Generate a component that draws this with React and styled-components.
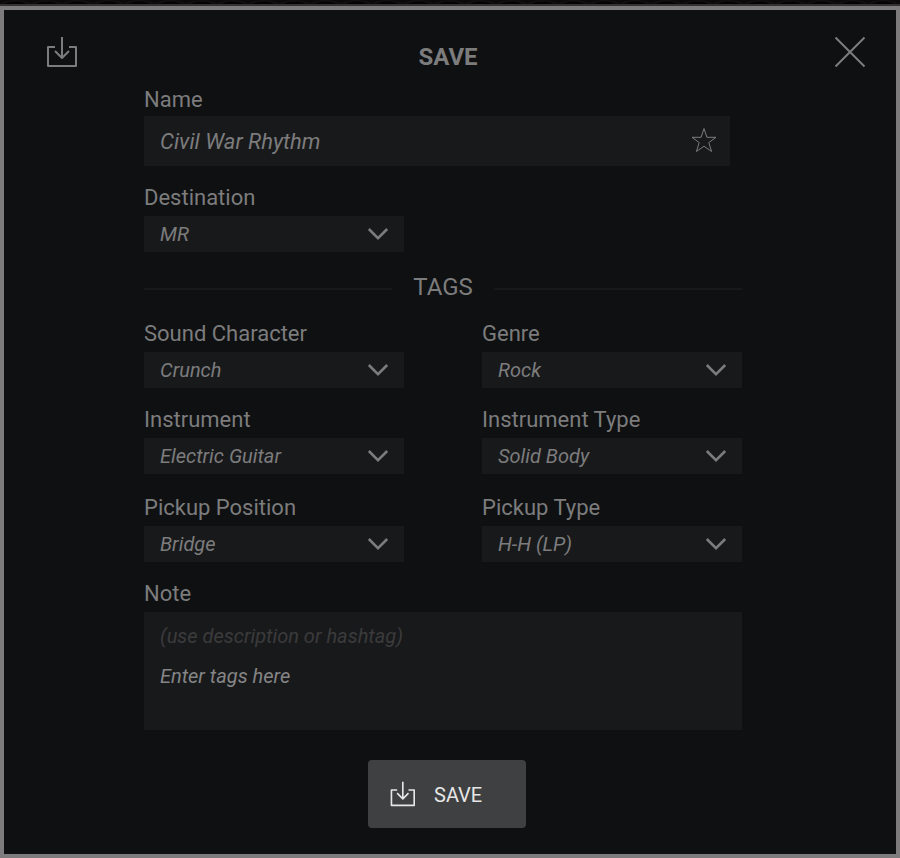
import React, { useId, useState } from "react";
import styled, { createGlobalStyle } from "styled-components";

const color = {
  panel: "#0f1012",
  field: "#18191b",
  text: "#7c7c7d",
  faint: "#3b3b3c",
  frame: "#7d7b7c",
  button: "#3f4042",
  buttonText: "#e6e6e6",
};

const GlobalStyle = createGlobalStyle`
  *, *::before, *::after { box-sizing: border-box; }
  body { margin: 0; background: #0b090a; }
  body, button, input, select, textarea { font-family: Roboto, "Liberation Sans", sans-serif; }
`;

const Page = styled.div`
  display: flex;
  flex-direction: column;
  min-height: 100vh;
`;

const Backdrop = styled.div`
  height: 6px;
  flex: none;
  background: radial-gradient(ellipse at 50% 120%, #050404 40%, #131011 60%, #0b090a 75%) 0 0 / 31px 4px;
  border-bottom: 2px solid #343132;
`;

const Dialog = styled.main`
  flex: 1;
  border: 4px solid ${color.frame};
  background: ${color.panel};
  color: ${color.text};
`;

const Header = styled.header`
  display: grid;
  grid-template-columns: 1fr auto 1fr;
  padding: 12px 16px 0 12px;
`;

const HeaderMark = styled.span`
  padding: 14px 0 0 29px;
  height: 60px;
`;

const Title = styled.h1`
  margin: 0;
  padding-top: 21px;
  font-size: 24px;
  font-weight: 700;
  line-height: 28px;
`;

const CloseButton = styled.button`
  justify-self: end;
  display: grid;
  place-items: center;
  width: 60px;
  height: 60px;
  padding: 0;
  border: 0;
  background: none;
  color: inherit;
  cursor: pointer;
`;

const Drawing = styled.svg`
  display: block;
  fill: none;
  stroke: currentColor;
`;

const Form = styled.form`
  padding: 6px 154px 24px 140px;
`;

const Field = styled.div`
  display: flex;
  flex-direction: column;
  gap: ${(p) => p.$gap || 6}px;
`;

const Label = styled.label`
  font-size: 22px;
  line-height: 24px;
`;

const NameBox = styled.div`
  display: flex;
  align-items: center;
  height: 50px;
  margin-right: 12px;
  padding: 0 12px 0 16px;
  background: ${color.field};
`;

const NameInput = styled.input`
  flex: 1;
  min-width: 0;
  padding: 2px 0 0;
  border: 0;
  outline: 0;
  background: none;
  color: inherit;
  font-size: 22px;
  font-style: italic;
  line-height: 28px;
`;

const StarButton = styled.button`
  padding: 0;
  border: 0;
  background: none;
  color: inherit;
  cursor: pointer;
`;

const Row = styled.div`
  display: grid;
  grid-template-columns: 1fr 1fr;
  column-gap: 78px;
  margin-top: ${(p) => p.$space}px;
`;

const SelectBox = styled.div`
  display: grid;
  align-items: center;
  background: ${color.field};

  & > * { grid-area: 1 / 1; }
  & > svg { justify-self: end; margin-right: 15px; pointer-events: none; }
`;

const Select = styled.select`
  appearance: none;
  width: 100%;
  height: 36px;
  padding: 0 48px 0 16px;
  border: 0;
  border-radius: 0;
  background: none;
  color: inherit;
  font-size: 20px;
  font-style: italic;
`;

const TagsHeading = styled.h2`
  display: flex;
  align-items: center;
  gap: 21px;
  margin: 21px 0 0;
  font-size: 24px;
  font-weight: 400;
  line-height: 28px;

  &::before, &::after {
    content: "";
    flex: 1;
    height: 2px;
    background: #18191b;
  }
`;

const TagsText = styled.span`
  padding-bottom: 4px;
`;

const NoteField = styled(Field)`
  margin-top: 20px;
`;

const NoteBox = styled.div`
  display: flex;
  flex-direction: column;
  gap: 16px;
  padding: 12px 16px 6px;
  background: ${color.field};
  font-size: 20px;
  font-style: italic;
  line-height: 24px;
`;

const Hint = styled.span`
  color: ${color.faint};
`;

const NoteInput = styled.textarea`
  height: 60px;
  padding: 0;
  border: 0;
  outline: 0;
  resize: none;
  background: none;
  color: #858586;
  font: inherit;
  font-family: Roboto, "Liberation Sans", sans-serif;
`;

const Actions = styled.div`
  display: flex;
  justify-content: center;
  padding: 30px 0 0 8px;
`;

const SaveButton = styled.button`
  display: flex;
  align-items: center;
  gap: 19px;
  width: 158px;
  height: 68px;
  padding: 0 21px;
  border: 0;
  border-radius: 4px;
  background: ${color.button};
  color: ${color.buttonText};
  font-size: 20px;
  cursor: pointer;
`;

const ButtonText = styled.span`
  padding-top: 2px;
`;

function SaveIcon({ size }) {
  return (
    <Drawing width={size} height={size} viewBox="0 0 32 32" strokeWidth="2" strokeLinejoin="round" aria-hidden="true">
      <path d="M10 11H3v19h28V11h-7" />
      <path d="M17 1v20.500M10 15l7 7 7-7" />
    </Drawing>
  );
}

function CloseIcon() {
  return (
    <Drawing width="32" height="32" viewBox="0 0 32 32" strokeWidth="2" aria-hidden="true">
      <path d="M1.500 1.500l29 29M30.500 1.500l-29 29" />
    </Drawing>
  );
}

function StarIcon() {
  return (
    <Drawing width="28" height="28" viewBox="0 0 28 28" strokeWidth="1" aria-hidden="true">
      <path d="M14 1.500L16.900 10.300H26L18.800 15.600L21.600 24.500L14 19.200L6.400 24.500L9.200 15.600L2 10.300H11.100Z" />
    </Drawing>
  );
}

function ChevronIcon() {
  return (
    <Drawing width="22" height="14" viewBox="0 0 22 14" strokeWidth="2.500" aria-hidden="true">
      <path d="M1.800 2L11 11.200L20.200 2" />
    </Drawing>
  );
}

function SelectField({ label, value }) {
  const id = useId();
  return (
    <Field>
      <Label htmlFor={id}>{label}</Label>
      <SelectBox>
        <Select id={id} defaultValue={value}>
          <option>{value}</option>
        </Select>
        <ChevronIcon />
      </SelectBox>
    </Field>
  );
}

export default function App() {
  const [favourite, setFavourite] = useState(false);
  return (
    <>
      <GlobalStyle />
      <Page>
        <Backdrop />
        <Dialog>
          <Header>
            <HeaderMark><SaveIcon size={32} /></HeaderMark>
            <Title>SAVE</Title>
            <CloseButton type="button" aria-label="Close"><CloseIcon /></CloseButton>
          </Header>
          <Form onSubmit={(e) => e.preventDefault()}>
            <Field $gap={4}>
              <Label htmlFor="preset-name">Name</Label>
              <NameBox>
                <NameInput id="preset-name" defaultValue="Civil War Rhythm" />
                <StarButton
                  type="button"
                  aria-label="Favourite"
                  aria-pressed={favourite}
                  onClick={() => setFavourite(!favourite)}
                >
                  <StarIcon />
                </StarButton>
              </NameBox>
            </Field>
            <Row $space={20}>
              <SelectField label="Destination" value="MR" />
            </Row>
            <TagsHeading><TagsText>TAGS</TagsText></TagsHeading>
            <Row $space={17}>
              <SelectField label="Sound Character" value="Crunch" />
              <SelectField label="Genre" value="Rock" />
            </Row>
            <Row $space={20}>
              <SelectField label="Instrument" value="Electric Guitar" />
              <SelectField label="Instrument Type" value="Solid Body" />
            </Row>
            <Row $space={22}>
              <SelectField label="Pickup Position" value="Bridge" />
              <SelectField label="Pickup Type" value="H-H (LP)" />
            </Row>
            <NoteField>
              <Label htmlFor="preset-note">Note</Label>
              <NoteBox>
                <Hint id="note-hint">(use description or hashtag)</Hint>
                <NoteInput id="preset-note" aria-describedby="note-hint" defaultValue="Enter tags here" />
              </NoteBox>
            </NoteField>
            <Actions>
              <SaveButton type="submit"><SaveIcon size={26} /><ButtonText>SAVE</ButtonText></SaveButton>
            </Actions>
          </Form>
        </Dialog>
      </Page>
    </>
  );
}
